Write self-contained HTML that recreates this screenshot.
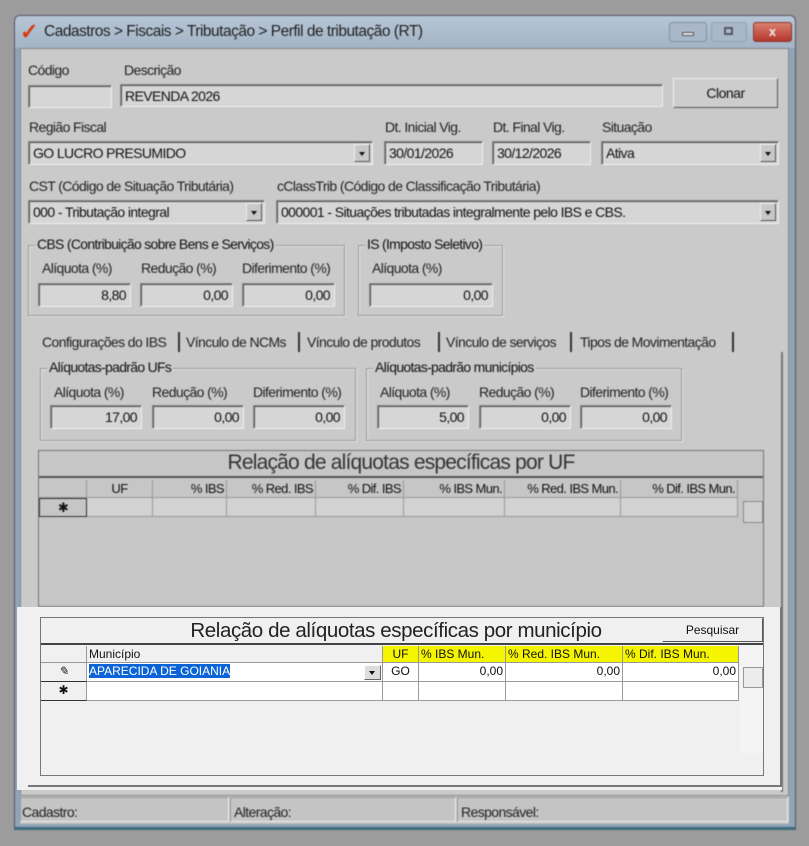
<!DOCTYPE html>
<html><head><meta charset="utf-8"><style>
*{box-sizing:border-box;margin:0;padding:0}
body{width:809px;height:846px;background:#9c9c9c;font-family:"Liberation Sans",sans-serif;font-size:12px;color:#111;position:relative;overflow:hidden}
.a{position:absolute}
#dim{position:absolute;left:0;top:0;width:809px;height:846px;filter:blur(0.6px)}
.lbl{position:absolute;font-size:14px;letter-spacing:-0.6px;color:#222;white-space:nowrap}
.inp{position:absolute;background:#d6d6d6;border:1px solid #8a8a8a;border-right-color:#eee;border-bottom-color:#eee;box-shadow:inset 1px 1px 0 #555;height:24px;font-size:14px;letter-spacing:-0.6px;padding:3px 4px;white-space:nowrap}
.r{text-align:right}
.dd{position:absolute;right:2px;top:2px;width:16px;height:18px;background:#c8c8c8;border:1px solid #eee;border-right-color:#555;border-bottom-color:#555}
.dd:after{content:"";position:absolute;left:4px;top:7px;border:3px solid transparent;border-top:4px solid #111}
.grp{position:absolute;border:1px solid #999;box-shadow:1px 1px 0 #e2e2e2 inset,1px 1px 0 #e2e2e2}
.grp span{position:absolute;top:-10px;left:6px;background:#cacaca;padding:0 2px;font-size:14px;letter-spacing:-0.7px}
.btn{position:absolute;background:#cdcdcd;border:1px solid #f0f0f0;border-right-color:#555;border-bottom-color:#555;text-align:center;font-size:14px;letter-spacing:-0.5px}
.cell{position:absolute;border-right:1px solid #999;border-bottom:1px solid #999;font-size:12px;white-space:nowrap;padding:1px 2px;overflow:hidden}
.dim .cell{font-size:13px;letter-spacing:-0.6px}
</style></head><body>
<div id="dim" class="dim">
<div class="a" style="left:14px;top:15px;width:782px;height:815px;background:#8fa4b8;border:1px solid #556;border-radius:6px 6px 0 0;border-bottom:3px solid #3d6d7c"></div>
<div class="a" style="left:15px;top:16px;width:780px;height:32px;background:linear-gradient(#b6c6d6,#a3b4c6);border-radius:5px 5px 0 0"></div>
<div class="a" style="left:20px;top:19px;font-size:22px;color:#d83a10;font-weight:bold">✓</div>
<div class="a" style="left:44px;top:23px;font-size:15.5px;letter-spacing:-0.5px;color:#222">Cadastros &gt; Fiscais &gt; Tributação &gt; Perfil de tributação (RT)</div>
<div class="a" style="left:669px;top:22px;width:38px;height:20px;border:1px solid #7f90a4;border-radius:3px;background:#a9b8c9"></div>
<div class="a" style="left:682px;top:32px;width:12px;height:4px;background:#e8e8e8;border:1px solid #556"></div>
<div class="a" style="left:711px;top:22px;width:36px;height:20px;border:1px solid #8ea0b3;border-radius:3px;background:#a9b8c9"></div>
<div class="a" style="left:724px;top:27px;width:9px;height:8px;border:2px solid #556"></div>
<div class="a" style="left:753px;top:22px;width:39px;height:20px;border:1px solid #8a3a30;border-radius:3px;background:linear-gradient(#d98070,#b5362a);color:#eee;text-align:center;font-weight:bold;font-size:13px;line-height:18px">x</div>
<div class="a" style="left:20px;top:48px;width:769px;height:748px;background:#cacaca;border:1px solid #888"></div>
<div class="a" style="left:20px;top:796px;width:769px;height:28px;background:#c4c4c4"></div>

<div class="lbl" style="left:28px;top:62px">Código</div>
<div class="inp" style="left:28px;top:85px;width:84px;height:23px"></div>
<div class="lbl" style="left:124px;top:62px">Descrição</div>
<div class="inp" style="left:120px;top:84px;width:543px;height:23px">REVENDA 2026</div>
<div class="btn" style="left:673px;top:78px;width:105px;height:30px;line-height:28px">Clonar</div>

<div class="lbl" style="left:29px;top:119px">Região Fiscal</div>
<div class="inp" style="left:28px;top:141px;width:345px">GO LUCRO PRESUMIDO<div class="dd"></div></div>
<div class="lbl" style="left:385px;top:119px">Dt. Inicial Vig.</div>
<div class="inp" style="left:384px;top:141px;width:99px">30/01/2026</div>
<div class="lbl" style="left:493px;top:119px">Dt. Final Vig.</div>
<div class="inp" style="left:492px;top:141px;width:99px">30/12/2026</div>
<div class="lbl" style="left:602px;top:119px">Situação</div>
<div class="inp" style="left:601px;top:141px;width:178px">Ativa<div class="dd"></div></div>

<div class="lbl" style="left:29px;top:178px">CST (Código de Situação Tributária)</div>
<div class="inp" style="left:28px;top:200px;width:237px">000 - Tributação integral<div class="dd"></div></div>
<div class="lbl" style="left:277px;top:178px">cClassTrib (Código de Classificação Tributária)</div>
<div class="inp" style="left:276px;top:200px;width:503px">000001 - Situações tributadas integralmente pelo IBS e CBS.<div class="dd"></div></div>

<div class="grp" style="left:28px;top:245px;width:317px;height:71px"><span>CBS (Contribuição sobre Bens e Serviços)</span></div>
<div class="lbl" style="left:42px;top:260px">Alíquota (%)</div><div class="lbl" style="left:141px;top:260px">Redução (%)</div><div class="lbl" style="left:242px;top:260px">Diferimento (%)</div>
<div class="inp r" style="left:38px;top:283px;width:93px">8,80</div>
<div class="inp r" style="left:140px;top:283px;width:93px">0,00</div>
<div class="inp r" style="left:242px;top:283px;width:93px">0,00</div>
<div class="grp" style="left:358px;top:245px;width:145px;height:71px"><span>IS (Imposto Seletivo)</span></div>
<div class="lbl" style="left:372px;top:260px">Alíquota (%)</div>
<div class="inp r" style="left:369px;top:283px;width:124px">0,00</div>

<div class="lbl" style="left:42px;top:334px">Configurações do IBS</div>
<div class="lbl" style="left:186px;top:334px">Vínculo de NCMs</div>
<div class="lbl" style="left:307px;top:334px">Vínculo de produtos</div>
<div class="lbl" style="left:446px;top:334px">Vínculo de serviços</div>
<div class="lbl" style="left:580px;top:334px">Tipos de Movimentação</div>
<div class="a" style="left:178px;top:332px;width:2px;height:20px;background:#333"></div>
<div class="a" style="left:298px;top:332px;width:2px;height:20px;background:#333"></div>
<div class="a" style="left:438px;top:332px;width:2px;height:20px;background:#333"></div>
<div class="a" style="left:570px;top:332px;width:2px;height:20px;background:#333"></div>
<div class="a" style="left:732px;top:332px;width:2px;height:20px;background:#333"></div>
<div class="a" style="left:28px;top:352px;width:755px;height:440px;border-right:2px solid #777"></div>

<div class="grp" style="left:40px;top:368px;width:316px;height:73px"><span>Alíquotas-padrão UFs</span></div>
<div class="lbl" style="left:54px;top:384px">Alíquota (%)</div><div class="lbl" style="left:152px;top:384px">Redução (%)</div><div class="lbl" style="left:253px;top:384px">Diferimento (%)</div>
<div class="inp r" style="left:50px;top:405px;width:92px">17,00</div>
<div class="inp r" style="left:152px;top:405px;width:92px">0,00</div>
<div class="inp r" style="left:253px;top:405px;width:92px">0,00</div>
<div class="grp" style="left:366px;top:368px;width:316px;height:73px"><span>Alíquotas-padrão municípios</span></div>
<div class="lbl" style="left:380px;top:384px">Alíquota (%)</div><div class="lbl" style="left:479px;top:384px">Redução (%)</div><div class="lbl" style="left:580px;top:384px">Diferimento (%)</div>
<div class="inp r" style="left:377px;top:405px;width:92px">5,00</div>
<div class="inp r" style="left:479px;top:405px;width:92px">0,00</div>
<div class="inp r" style="left:580px;top:405px;width:92px">0,00</div>

<div class="a" style="left:38px;top:450px;width:726px;height:157px;border:1px solid #777;background:#c6c6c6"></div>
<div class="a" style="left:39px;top:451px;width:724px;height:27px;border-bottom:2px solid #555;text-align:center;font-size:21px;color:#333;letter-spacing:-0.8px">Relação de alíquotas específicas por UF</div>
<div class="cell" style="left:39px;top:480px;width:48px;height:18px"></div>
<div class="cell" style="left:87px;top:480px;width:66px;height:18px;text-align:center">UF</div>
<div class="cell r" style="left:153px;top:480px;width:74px;height:18px">% IBS</div>
<div class="cell r" style="left:227px;top:480px;width:89px;height:18px">% Red. IBS</div>
<div class="cell r" style="left:316px;top:480px;width:88px;height:18px">% Dif. IBS</div>
<div class="cell r" style="left:404px;top:480px;width:101px;height:18px">% IBS Mun.</div>
<div class="cell r" style="left:505px;top:480px;width:116px;height:18px">% Red. IBS Mun.</div>
<div class="cell r" style="left:621px;top:480px;width:117px;height:18px">% Dif. IBS Mun.</div>
<div class="cell" style="left:39px;top:498px;width:48px;height:19px;text-align:center;border:1px solid #333">✱</div>
<div class="cell" style="left:87px;top:498px;width:66px;height:19px;background:#d2d2d2"></div>
<div class="cell" style="left:153px;top:498px;width:74px;height:19px;background:#d2d2d2"></div>
<div class="cell" style="left:227px;top:498px;width:89px;height:19px;background:#d2d2d2"></div>
<div class="cell" style="left:316px;top:498px;width:88px;height:19px;background:#d2d2d2"></div>
<div class="cell" style="left:404px;top:498px;width:101px;height:19px;background:#d2d2d2"></div>
<div class="cell" style="left:505px;top:498px;width:116px;height:19px;background:#d2d2d2"></div>
<div class="cell" style="left:621px;top:498px;width:117px;height:19px;background:#d2d2d2"></div>
<div class="a" style="left:743px;top:501px;width:20px;height:22px;border:1px solid #888;background:#d0d0d0"></div>

<div class="a" style="left:20px;top:797px;width:209px;height:25px;border:1px solid #999;border-right-color:#eee;border-bottom-color:#eee"></div>
<div class="a" style="left:230px;top:797px;width:226px;height:25px;border:1px solid #999;border-right-color:#eee;border-bottom-color:#eee"></div>
<div class="a" style="left:457px;top:797px;width:331px;height:25px;border:1px solid #999;border-right-color:#eee;border-bottom-color:#eee"></div>
<div class="lbl" style="left:22px;top:804px">Cadastro:</div>
<div class="lbl" style="left:234px;top:804px">Alteração:</div>
<div class="lbl" style="left:461px;top:804px">Responsável:</div>
</div>

<div class="a" style="left:17px;top:607px;width:765px;height:183px;background:#f0f0f0"></div>
<div class="a" style="left:28px;top:607px;width:754px;height:180px;border-right:2px solid #777;border-bottom:2px solid #777"></div>
<div class="a" style="left:40px;top:617px;width:724px;height:159px;border:1px solid #777;background:#f0f0f0"></div>
<div class="a" style="left:41px;top:618px;width:722px;height:27px;border-bottom:2px solid #444;text-align:center;font-size:20.5px;color:#222;letter-spacing:-0.4px;line-height:26px;padding-right:12px">Relação de alíquotas específicas por município</div>
<div class="btn" style="left:662px;top:618px;width:101px;height:24px;line-height:22px;background:#f0f0f0;font-size:12px;letter-spacing:0">Pesquisar</div>
<div class="cell" style="left:41px;top:646px;width:46px;height:17px"></div>
<div class="cell" style="left:87px;top:646px;width:296px;height:17px">Município</div>
<div class="cell" style="left:383px;top:646px;width:36px;height:17px;background:#f5f500;text-align:center">UF</div>
<div class="cell" style="left:419px;top:646px;width:87px;height:17px;background:#f5f500">% IBS Mun.</div>
<div class="cell" style="left:506px;top:646px;width:117px;height:17px;background:#f5f500">% Red. IBS Mun.</div>
<div class="cell" style="left:623px;top:646px;width:116px;height:17px;background:#f5f500">% Dif. IBS Mun.</div>
<div class="cell" style="left:41px;top:663px;width:46px;height:19px;border-bottom-color:#333;text-align:center;font-style:italic">✎</div>
<div class="cell" style="left:87px;top:663px;width:296px;height:19px;background:#fff"><span style="background:#0a64d8;color:#fff">APARECIDA DE GOIANIA</span></div>
<div class="a" style="left:364px;top:665px;width:17px;height:15px;background:#ddd;border:1px solid #fff;border-right-color:#666;border-bottom-color:#666"></div>
<div class="a" style="left:369px;top:671px;border:3px solid transparent;border-top:4px solid #111"></div>
<div class="cell" style="left:383px;top:663px;width:36px;height:19px;background:#fff;text-align:center">GO</div>
<div class="cell r" style="left:419px;top:663px;width:87px;height:19px;background:#fff">0,00</div>
<div class="cell r" style="left:506px;top:663px;width:117px;height:19px;background:#fff">0,00</div>
<div class="cell r" style="left:623px;top:663px;width:116px;height:19px;background:#fff">0,00</div>
<div class="cell" style="left:41px;top:682px;width:46px;height:19px;text-align:center;border-bottom-color:#333">✱</div>
<div class="cell" style="left:87px;top:682px;width:296px;height:19px;background:#fff"></div>
<div class="cell" style="left:383px;top:682px;width:36px;height:19px;background:#fff"></div>
<div class="cell" style="left:419px;top:682px;width:87px;height:19px;background:#fff"></div>
<div class="cell" style="left:506px;top:682px;width:117px;height:19px;background:#fff"></div>
<div class="cell" style="left:623px;top:682px;width:116px;height:19px;background:#fff"></div>
<div class="a" style="left:740px;top:646px;width:23px;height:107px;background:#f4f4f4"></div>
<div class="a" style="left:743px;top:667px;width:20px;height:21px;border:1px solid #999;background:#ececec"></div>
</body></html>
